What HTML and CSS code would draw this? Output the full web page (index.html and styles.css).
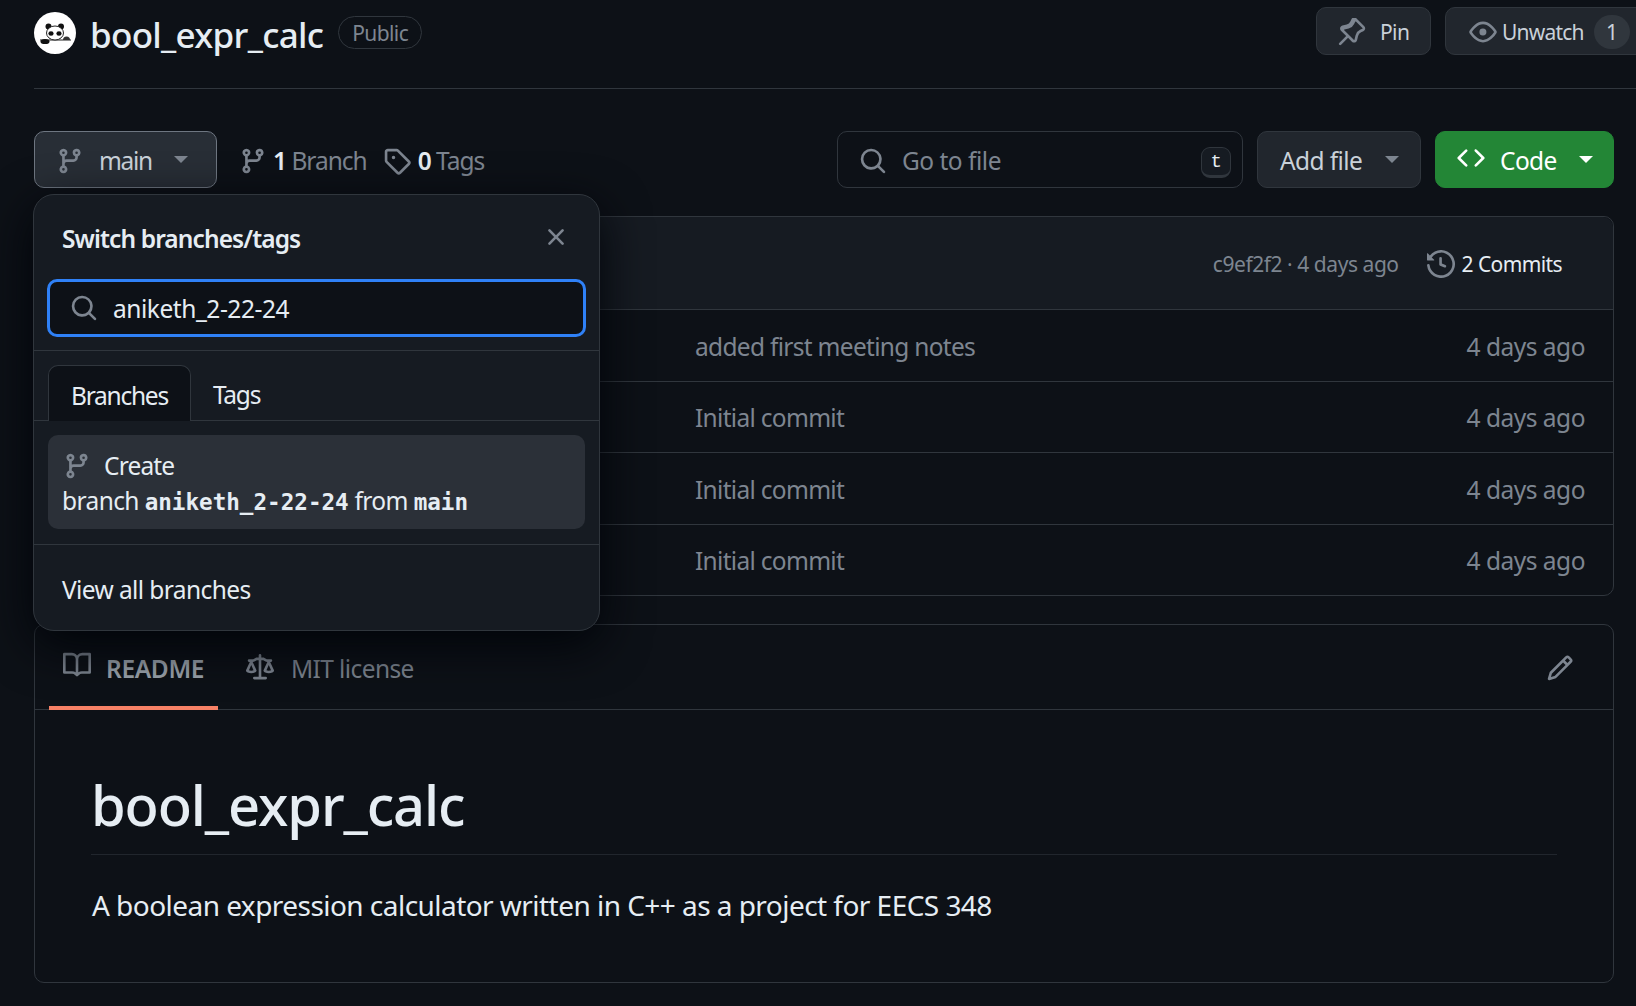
FILE: index.html
```html
<!DOCTYPE html>
<html lang="en">
<head>
    <meta charset="UTF-8">
    <title>bool_expr_calc</title>
    <link rel="stylesheet" href="styles.css">
</head>
<body>
    <svg class="sprite" xmlns="http://www.w3.org/2000/svg">
        <symbol id="i-branch" viewBox="0 0 16 16"><path d="M9.5 3.25a2.25 2.25 0 1 1 3 2.122V6A2.5 2.5 0 0 1 10 8.5H6a1 1 0 0 0-1 1v1.128a2.251 2.251 0 1 1-1.5 0V5.372a2.25 2.25 0 1 1 1.5 0v1.836A2.493 2.493 0 0 1 6 7h4a1 1 0 0 0 1-1v-.628A2.25 2.25 0 0 1 9.5 3.25Zm-6 0a.75.75 0 1 0 1.5 0 .75.75 0 0 0-1.5 0Zm8.25-.75a.75.75 0 1 0 0 1.5.75.75 0 0 0 0-1.5ZM4.25 12a.75.75 0 1 0 0 1.5.75.75 0 0 0 0-1.5Z"/></symbol>
        <symbol id="i-tag" viewBox="0 0 16 16"><path d="M1 7.775V2.75C1 1.784 1.784 1 2.75 1h5.025c.464 0 .91.184 1.238.513l6.25 6.25a1.75 1.75 0 0 1 0 2.474l-5.026 5.026a1.75 1.75 0 0 1-2.474 0l-6.25-6.25A1.752 1.752 0 0 1 1 7.775Zm1.5 0c0 .066.026.13.073.177l6.25 6.25a.25.25 0 0 0 .354 0l5.025-5.025a.25.25 0 0 0 0-.354l-6.25-6.25a.25.25 0 0 0-.177-.073H2.75a.25.25 0 0 0-.25.25ZM6 5a1 1 0 1 1 0 2 1 1 0 0 1 0-2Z"/></symbol>
        <symbol id="i-search" viewBox="0 0 16 16"><path d="M10.68 11.74a6 6 0 0 1-7.922-8.982 6 6 0 0 1 8.982 7.922l3.04 3.04a.749.749 0 0 1-.326 1.275.749.749 0 0 1-.734-.215ZM11.5 7a4.499 4.499 0 1 0-8.997 0A4.499 4.499 0 0 0 11.5 7Z"/></symbol>
        <symbol id="i-x" viewBox="0 0 16 16"><path d="M3.72 3.72a.75.75 0 0 1 1.06 0L8 6.94l3.22-3.22a.749.749 0 0 1 1.275.326.749.749 0 0 1-.215.734L9.06 8l3.22 3.22a.749.749 0 0 1-.326 1.275.749.749 0 0 1-.734-.215L8 9.06l-3.22 3.22a.751.751 0 0 1-1.042-.018.751.751 0 0 1-.018-1.042L6.94 8 3.72 4.78a.75.75 0 0 1 0-1.06Z"/></symbol>
        <symbol id="i-code" viewBox="0 0 16 16"><path d="m11.28 3.22 4.25 4.25a.75.75 0 0 1 0 1.06l-4.25 4.25a.749.749 0 0 1-1.275-.326.749.749 0 0 1 .215-.734L13.94 8l-3.72-3.72a.749.749 0 0 1 .326-1.275.749.749 0 0 1 .734.215Zm-6.56 0a.751.751 0 0 1 1.042.018.751.751 0 0 1 .018 1.042L2.06 8l3.72 3.72a.749.749 0 0 1-.326 1.275.749.749 0 0 1-.734-.215L.47 8.53a.75.75 0 0 1 0-1.06Z"/></symbol>
        <symbol id="i-pin" viewBox="0 0 16 16"><path d="m11.294.984 3.722 3.722a1.75 1.75 0 0 1-.504 2.826l-1.327.613a3.089 3.089 0 0 0-1.707 2.084l-.584 2.454c-.317 1.332-1.972 1.8-2.94.832L5.75 11.311 1.78 15.28a.749.749 0 0 1-1.275-.326.749.749 0 0 1 .215-.734L4.689 10.25 1.685 7.246c-.968-.968-.5-2.623.832-2.94l2.454-.584a3.08 3.08 0 0 0 2.084-1.707l.613-1.327a1.75 1.75 0 0 1 2.826-.504ZM6.283 9.723l2.732 2.731a.25.25 0 0 0 .42-.119l.584-2.454a4.586 4.586 0 0 1 2.537-3.098l1.328-.613a.25.25 0 0 0 .072-.404l-3.722-3.722a.25.25 0 0 0-.404.072l-.613 1.328a4.584 4.584 0 0 1-3.098 2.537l-2.454.584a.25.25 0 0 0-.119.42l2.731 2.732Z"/></symbol>
        <symbol id="i-eye" viewBox="0 0 16 16"><path d="M8 2c1.981 0 3.671.992 4.933 2.078 1.27 1.091 2.187 2.345 2.637 3.023a1.62 1.62 0 0 1 0 1.798c-.45.678-1.367 1.932-2.637 3.023C11.67 13.008 9.981 14 8 14c-1.981 0-3.671-.992-4.933-2.078C1.797 10.83.88 9.576.43 8.898a1.62 1.62 0 0 1 0-1.798c.45-.677 1.367-1.931 2.637-3.022C4.33 2.992 6.019 2 8 2ZM1.679 7.932a.12.12 0 0 0 0 .136c.411.622 1.241 1.75 2.366 2.717C5.176 11.758 6.527 12.5 8 12.5c1.473 0 2.825-.742 3.955-1.715 1.124-.967 1.954-2.096 2.366-2.717a.12.12 0 0 0 0-.136c-.412-.621-1.242-1.75-2.366-2.717C10.824 4.242 9.473 3.5 8 3.5c-1.473 0-2.825.742-3.955 1.715-1.124.967-1.954 2.096-2.366 2.717ZM8 10a2 2 0 1 1-.001-3.999A2 2 0 0 1 8 10Z"/></symbol>
        <symbol id="i-history" viewBox="0 0 16 16"><path d="m.427 1.927 1.215 1.215a8.002 8.002 0 1 1-1.6 5.685.75.75 0 1 1 1.493-.154 6.5 6.5 0 1 0 1.18-4.458l1.358 1.358A.25.25 0 0 1 3.896 6H.25A.25.25 0 0 1 0 5.75V2.104a.25.25 0 0 1 .427-.177ZM7.75 4a.75.75 0 0 1 .75.75v2.992l2.028.812a.75.75 0 0 1-.557 1.392l-2.5-1A.751.751 0 0 1 7 8.25v-3.5A.75.75 0 0 1 7.75 4Z"/></symbol>
        <symbol id="i-book" viewBox="0 0 16 16"><path d="M0 1.75A.75.75 0 0 1 .75 1h4.253c1.227 0 2.317.59 3 1.501A3.743 3.743 0 0 1 11.006 1h4.245a.75.75 0 0 1 .75.75v10.5a.75.75 0 0 1-.75.75h-4.507a2.25 2.25 0 0 0-1.591.659l-.622.621a.75.75 0 0 1-1.06 0l-.622-.621A2.25 2.25 0 0 0 5.258 13H.75a.75.75 0 0 1-.75-.75Zm7.251 10.324.004-5.073-.002-2.253A2.25 2.25 0 0 0 5.003 2.5H1.5v9h3.757a3.75 3.75 0 0 1 1.994.574ZM8.755 4.75l-.004 7.322a3.752 3.752 0 0 1 1.992-.572H14.5v-9h-3.495a2.25 2.25 0 0 0-2.25 2.25Z"/></symbol>
        <symbol id="i-law" viewBox="0 0 16 16"><path d="M8.75.75V2h.985c.304 0 .603.08.867.231l1.29.736c.038.022.08.033.124.033h2.234a.75.75 0 0 1 0 1.5h-.427l2.111 4.692a.75.75 0 0 1-.154.838l-.53-.53.529.531-.001.002-.002.002-.006.006-.006.005-.01.01-.045.04c-.21.176-.441.327-.686.45C14.556 10.78 13.88 11 13 11a4.498 4.498 0 0 1-2.023-.454 3.544 3.544 0 0 1-.686-.45l-.045-.04-.016-.015-.006-.006-.004-.004v-.001a.75.75 0 0 1-.154-.838L12.178 4.5h-.162c-.305 0-.604-.079-.868-.231l-1.29-.736a.245.245 0 0 0-.124-.033H8.75V13h2.5a.75.75 0 0 1 0 1.5h-6.5a.75.75 0 0 1 0-1.5h2.5V3.5h-.984a.245.245 0 0 0-.124.033l-1.289.737c-.265.15-.564.23-.869.23h-.162l2.112 4.692a.75.75 0 0 1-.154.838l-.53-.53.529.531-.001.002-.002.002-.006.006-.016.015-.045.04c-.21.176-.441.327-.686.45C4.556 10.78 3.88 11 3 11a4.498 4.498 0 0 1-2.023-.454 3.544 3.544 0 0 1-.686-.45l-.045-.04-.016-.015-.006-.006-.004-.004v-.001a.75.75 0 0 1-.154-.838L2.178 4.5H1.75a.75.75 0 0 1 0-1.5h2.234a.249.249 0 0 0 .125-.033l1.288-.737c.265-.15.564-.23.869-.23h.984V.75a.75.75 0 0 1 1.5 0Zm2.945 8.477c.285.135.718.273 1.305.273s1.02-.138 1.305-.273L13 6.327Zm-10 0c.285.135.718.273 1.305.273s1.02-.138 1.305-.273L3 6.327Z"/></symbol>
        <symbol id="i-pencil" viewBox="0 0 16 16"><path d="M11.013 1.427a1.75 1.75 0 0 1 2.474 0l1.086 1.086a1.75 1.75 0 0 1 0 2.474l-8.61 8.61c-.21.21-.47.364-.756.445l-3.251.93a.75.75 0 0 1-.927-.928l.929-3.25c.081-.286.235-.547.445-.758l8.61-8.61Zm.176 4.823L9.75 4.81l-6.286 6.287a.253.253 0 0 0-.064.108l-.558 1.953 1.953-.558a.253.253 0 0 0 .108-.064Zm1.238-3.763a.25.25 0 0 0-.354 0L10.811 3.75l1.439 1.44 1.263-1.263a.25.25 0 0 0 0-.354Z"/></symbol>
    </svg>

    <div class="page">
        <div class="repo-head">
            <svg class="avatar" viewBox="0 0 42 42">
                <circle cx="21" cy="21" r="21" fill="#fff"/>
                <path d="M6 28H37" stroke="#222" stroke-width="1"/>
                <circle cx="14.5" cy="14.5" r="3" fill="#111"/>
                <circle cx="27" cy="14.5" r="3" fill="#111"/>
                <ellipse cx="21" cy="21" rx="8.5" ry="7" fill="#fff" stroke="#222" stroke-width="1"/>
                <ellipse cx="17" cy="21.5" rx="2.6" ry="2.2" fill="#111"/>
                <ellipse cx="25" cy="21.5" rx="2.6" ry="2.2" fill="#111"/>
                <ellipse cx="11" cy="29.5" rx="4.5" ry="2.6" fill="#111"/>
                <path d="M29 28a3.5 3.5 0 0 1 7 0Z" fill="#333"/>
            </svg>
            <strong class="repo-name">bool_expr_calc</strong>
            <span class="visibility">Public</span>
            <div class="repo-actions">
                <button class="btn btn-pin"><svg class="icon"><use href="#i-pin"/></svg>Pin</button>
                <button class="btn btn-watch"><svg class="icon"><use href="#i-eye"/></svg>Unwatch<span class="counter">1</span></button>
            </div>
        </div>

        <div class="toolbar">
            <div class="branch-picker">
                <button class="btn btn-main"><svg class="icon"><use href="#i-branch"/></svg><span class="main-label">main</span><span class="caret"></span></button>

                <div class="popover">
                    <div class="pop-title">
                        <span>Switch branches/tags</span>
                        <svg class="icon icon-x"><use href="#i-x"/></svg>
                    </div>
                    <div class="pop-search">
                        <div class="pop-input"><svg class="icon"><use href="#i-search"/></svg>aniketh_2-22-24</div>
                    </div>
                    <div class="pop-tabs">
                        <span class="pop-tab active">Branches</span>
                        <span class="pop-tab">Tags</span>
                    </div>
                    <div class="pop-list">
                        <div class="pop-create">
                            <div class="create-top"><svg class="icon"><use href="#i-branch"/></svg>Create</div>
                            <div>branch <b class="mono">aniketh_2-22-24</b> from <b class="mono">main</b></div>
                        </div>
                    </div>
                    <div class="pop-foot">View all branches</div>
                </div>
            </div>
            <span class="stat stat-branch"><svg class="icon"><use href="#i-branch"/></svg><b>1</b> Branch</span>
            <span class="stat stat-tag"><svg class="icon"><use href="#i-tag"/></svg><b>0</b> Tags</span>

            <div class="goto">
                <svg class="icon"><use href="#i-search"/></svg>
                <span class="goto-text">Go to file</span>
                <kbd>t</kbd>
            </div>
            <button class="btn btn-add">Add file<span class="caret"></span></button>
            <button class="btn btn-code"><svg class="icon"><use href="#i-code"/></svg>Code<span class="caret"></span></button>
        </div>

        <div class="files">
            <div class="files-head">
                <span class="hash">c9ef2f2 · 4 days ago</span>
                <span class="commits"><svg class="icon"><use href="#i-history"/></svg>2 Commits</span>
            </div>
            <div class="file-row"><span class="msg">added first meeting notes</span><span class="age">4 days ago</span></div>
            <div class="file-row"><span class="msg">Initial commit</span><span class="age">4 days ago</span></div>
            <div class="file-row"><span class="msg">Initial commit</span><span class="age">4 days ago</span></div>
            <div class="file-row"><span class="msg">Initial commit</span><span class="age">4 days ago</span></div>
        </div>

        <div class="readme">
            <div class="readme-tabs">
                <span class="readme-tab active"><svg class="icon"><use href="#i-book"/></svg>README</span>
                <span class="readme-tab"><svg class="icon"><use href="#i-law"/></svg>MIT license</span>
                <svg class="icon icon-edit"><use href="#i-pencil"/></svg>
            </div>
            <div class="readme-body">
                <h1>bool_expr_calc</h1>
                <p>A boolean expression calculator written in C++ as a project for EECS 348</p>
            </div>
        </div>
    </div>
</body>
</html>
```

FILE: styles.css
```css
* {
    box-sizing: border-box;
}
html, body {
    height: 100%;
}
body {
    margin: 0;
    background: #0d1117;
    color: #e6edf3;
    font-family: "Noto Sans", "Open Sans", sans-serif;
    font-size: 24.5px;
    letter-spacing: -0.6px;
    overflow: hidden;
}
.sprite {
    display: none;
}
.icon {
    width: 28px;
    height: 28px;
    fill: #7d8590;
    flex: none;
}
.mono {
    font-family: "DejaVu Sans Mono", monospace;
    font-size: 22.6px;
    letter-spacing: 0;
}
.page {
    padding: 0 22px 0 34px;
}

/* repo title row */
.repo-head {
    display: flex;
    align-items: flex-start;
    height: 89px;
    margin-right: -76px;
    border-bottom: 1px solid #30363d;
}
.avatar {
    width: 42px;
    height: 42px;
    margin-top: 12px;
    flex: none;
}
.repo-name {
    margin: 8px 0 0 14px;
    font-size: 35px;
    font-weight: 500;
    line-height: 53px;
    letter-spacing: -0.7px;
}
.visibility {
    margin: 16px 0 0 15px;
    height: 33px;
    padding: 1px 13px 0;
    border: 1px solid #30363d;
    border-radius: 17px;
    color: #7d8590;
    font-size: 21px;
    line-height: 31px;
}
.repo-actions {
    display: flex;
    gap: 14px;
    margin: 7px 0 0 auto;
}
.btn {
    display: flex;
    align-items: center;
    border: 1px solid #30363d;
    border-radius: 10px;
    background: #21262d;
    color: #c9d1d9;
    font: inherit;
    letter-spacing: inherit;
    padding: 0;
}
.btn-pin {
    width: 115px;
    height: 48px;
    padding: 1px 0 0 21px;
    gap: 14px;
    font-size: 21px;
}
.btn-watch {
    width: 245px;
    height: 48px;
    padding: 1px 0 0 23px;
    gap: 5px;
    font-size: 21px;
    letter-spacing: -0.8px;
}
.counter {
    width: 36px;
    height: 34px;
    margin-left: 5px;
    border-radius: 17px;
    background: #30363d;
    text-align: center;
    line-height: 34px;
}

/* branch / search row */
.toolbar {
    display: flex;
    align-items: center;
    margin-top: 42px;
    height: 57px;
}
.branch-picker {
    position: relative;
}
.btn-main {
    width: 183px;
    height: 57px;
    padding: 2px 0 0 21px;
    background: #282e36;
    border-color: #6e7681;
}
.btn-main .icon {
    margin-right: 15px;
}
.main-label {
    letter-spacing: -1.3px;
}
.caret {
    width: 0;
    height: 0;
    border-left: 7px solid transparent;
    border-right: 7px solid transparent;
    border-top: 7px solid #7d8590;
}
.btn-main .caret {
    margin: -2px 0 0 22px;
}
.stat {
    display: flex;
    align-items: center;
    padding-top: 2px;
    color: #7d8590;
    white-space: pre;
    letter-spacing: -1px;
}
.stat b {
    color: #e6edf3;
    font-weight: 600;
}
.stat-branch {
    margin-left: 22px;
}
.stat-branch .icon {
    margin-right: 6px;
}
.stat-tag {
    margin-left: 16px;
}
.stat-tag .icon {
    margin-right: 7px;
}
.goto {
    display: flex;
    align-items: center;
    width: 406px;
    height: 57px;
    margin-left: auto;
    padding: 2px 11px 0 21px;
    border: 1px solid #30363d;
    border-radius: 10px;
    color: #7d8590;
}
.goto-text {
    margin-left: 15px;
    flex: 1;
    letter-spacing: -0.5px;
}
kbd {
    width: 30px;
    height: 31px;
    margin-top: 3px;
    border: 1px solid #30363d;
    border-bottom-width: 3px;
    border-radius: 9px;
    background: #161b22;
    color: #e6edf3;
    font: 19px/28px "Liberation Mono", monospace;
    text-align: center;
}
.btn-add {
    width: 164px;
    height: 57px;
    margin-left: 14px;
    padding: 2px 0 0 22px;
}
.btn-add .caret {
    margin: -2px 0 0 23px;
}
.btn-code {
    width: 179px;
    height: 57px;
    margin-left: 14px;
    padding: 2px 0 0 21px;
    background: #238636;
    border-color: #238636;
    color: #fff;
}
.btn-code .icon {
    fill: #fff;
    margin: -5px 15px 0 0;
}
.btn-code .caret {
    margin: -2px 0 0 22px;
    border-top-color: #fff;
}

/* popover */
.popover {
    position: absolute;
    top: 63px;
    left: -1px;
    width: 567px;
    height: 437px;
    background: #161b22;
    border: 1px solid #30363d;
    border-radius: 21px;
    box-shadow: 0 14px 48px #010409;
    z-index: 5;
}
.pop-title {
    display: flex;
    justify-content: space-between;
    align-items: center;
    height: 84px;
    padding: 3px 29px 0 28px;
    font-weight: 600;
    letter-spacing: -0.9px;
}
.icon-x {
    margin-top: -3px;
}
.pop-search {
    height: 72px;
    padding: 0 13px;
    border-bottom: 1px solid #30363d;
}
.pop-input {
    display: flex;
    align-items: center;
    gap: 15px;
    height: 58px;
    padding-left: 20px;
    background: #0d1117;
    border: 3px solid #2f81f7;
    border-radius: 10px;
    letter-spacing: -0.45px;
}
.pop-tabs {
    display: flex;
    height: 70px;
    padding: 14px 0 0 14px;
    border-bottom: 1px solid #30363d;
    letter-spacing: -1.25px;
}
.pop-tab {
    height: 56px;
    padding: 2px 22px 0;
    line-height: 56px;
}
.pop-tab.active {
    background: #0d1117;
    border: 1px solid #30363d;
    border-bottom: none;
    border-radius: 10px 10px 0 0;
}
.pop-list {
    height: 124px;
    padding: 14px 14px 0;
    border-bottom: 1px solid #30363d;
}
.pop-create {
    height: 94px;
    padding: 13px 14px 0;
    background: #2b3038;
    border-radius: 10px;
    line-height: 35px;
}
.create-top {
    display: flex;
    align-items: center;
    gap: 13px;
    margin-left: 1px;
    letter-spacing: -0.85px;
}
.pop-foot {
    padding: 27px 28px;
    line-height: 35px;
}

/* file list */
.files {
    margin-top: 28px;
    border: 1px solid #30363d;
    border-radius: 10px;
}
.files-head {
    display: flex;
    align-items: center;
    justify-content: flex-end;
    height: 92px;
    padding: 2px 51px 0 0;
    background: #161b22;
    border-radius: 10px 10px 0 0;
    font-size: 21px;
}
.hash {
    color: #7d8590;
    letter-spacing: -0.45px;
}
.commits {
    display: flex;
    align-items: center;
    gap: 7px;
    margin-left: 28px;
}
.file-row {
    display: flex;
    justify-content: space-between;
    align-items: center;
    height: 71.5px;
    padding: 2px 28px 0 660px;
    border-top: 1px solid #30363d;
    color: #7d8590;
}
.msg {
    letter-spacing: -0.7px;
}
.age {
    letter-spacing: -0.5px;
}

/* readme */
.readme {
    height: 359px;
    margin-top: 28px;
    border: 1px solid #30363d;
    border-radius: 10px;
}
.readme-tabs {
    display: flex;
    align-items: stretch;
    height: 85px;
    padding-left: 14px;
    border-bottom: 1px solid #30363d;
}
.readme-tab {
    display: flex;
    align-items: center;
    gap: 17px;
    padding: 2px 14px 0;
    margin-bottom: -1px;
    color: #7d8590;
}
.readme-tab .icon {
    margin-top: -2px;
}
.readme-tab.active {
    width: 169px;
    padding-top: 5px;
    gap: 15px;
    color: #9ca4ad;
    font-weight: 600;
    letter-spacing: -0.35px;
    border-bottom: 4px solid #f78166;
}
.readme-tab.active .icon {
    margin-top: -6px;
}
.readme-tab + .readme-tab {
    margin-left: 14px;
}
.icon-edit {
    align-self: center;
    margin: 2px 39px 0 auto;
}
.readme-body {
    padding: 59px 56px 0;
}
h1 {
    margin: 0;
    padding-bottom: 15px;
    border-bottom: 1px solid #21262d;
    font-size: 56px;
    font-weight: 500;
    line-height: 70px;
    letter-spacing: -1.1px;
}
p {
    margin: 29px 0 0 1px;
    font-size: 28px;
    line-height: 42px;
    letter-spacing: -0.54px;
}
```
